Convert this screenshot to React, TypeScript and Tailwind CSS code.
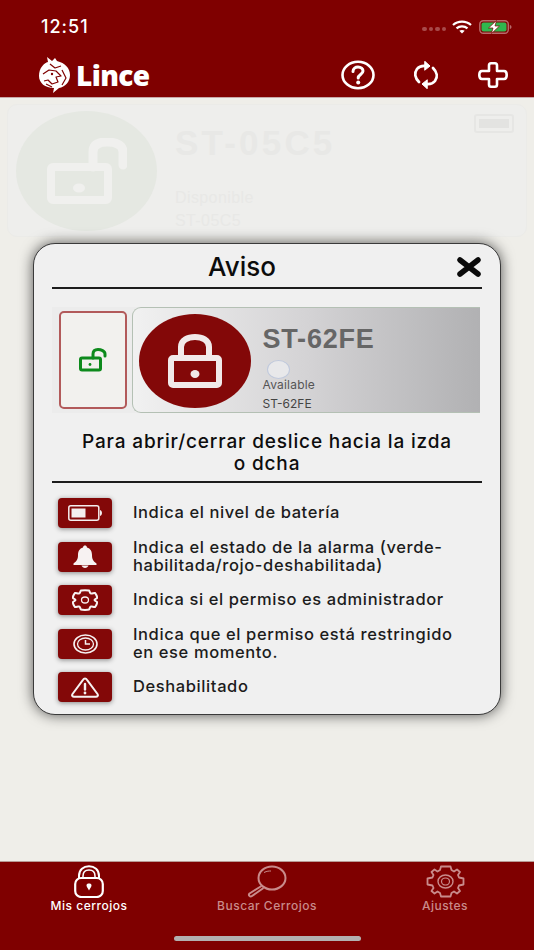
const sans = "font-['Inter','Liberation_Sans',sans-serif]";
const arial = "font-['Liberation_Sans',Arial,sans-serif]";

function LinceLogo() {
  return (
    <svg width="34" height="36" viewBox="0 0 34 36">
      <path d="M2 19C2 11 7 6 11 5L10 0L15 4L18 1L20 4C28 6 33 11 33 18C33 25 28 30 22 31L16 36L17 31C8 31 2 26 2 19Z" fill="#fff" />
      <path d="M6 17L12 13L19 14L24 19L19 20L21 25L15 27L11 23L7 24M13 7L18 11L24 9M25 13L29 21L25 28M9 27L15 30" fill="none" stroke="#7f0000" strokeWidth="1.2" strokeLinejoin="round" />
      <circle cx="15" cy="17" r="1.2" fill="#7f0000" />
    </svg>
  );
}

function HelpIcon() {
  return (
    <svg width="34" height="30" viewBox="0 0 34 30" fill="none" stroke="#fff">
      <ellipse cx="17" cy="15" rx="15.5" ry="13.2" strokeWidth="2.6" />
      <path d="M12 11.5C12 8.5 14.5 7 17 7C20 7 22 8.8 22 11C22 14.5 17.2 14.5 17.2 18" strokeWidth="3" strokeLinecap="round" />
      <circle cx="17.2" cy="22.5" r="2" fill="#fff" stroke="none" />
    </svg>
  );
}

function RefreshIcon() {
  return (
    <svg width="26" height="28" viewBox="0 0 26 28" fill="none" stroke="#fff" strokeWidth="2.8" strokeLinecap="round">
      <path d="M6 21C2 17 1 12 4 8C6 5.5 9 4.5 13 5" />
      <path d="M20 7C24 11 25 16 22 20C20 22.5 17 23.5 13 23" />
      <path d="M12 0.5L17 5L12 9Z" fill="#fff" strokeWidth="1" strokeLinejoin="round" />
      <path d="M14 19L9 23L14 27.5Z" fill="#fff" strokeWidth="1" strokeLinejoin="round" />
    </svg>
  );
}

function PlusIcon() {
  return (
    <svg width="30" height="26" viewBox="0 0 30 26" fill="none" stroke="#fff" strokeWidth="2.6" strokeLinejoin="round">
      <path d="M11 3.5C11 2 12 1.3 13 1.3H17C18 1.3 19 2 19 3.5V9H26C28 9 28.7 10.5 28.7 13C28.7 15.5 28 17 26 17H19V22.5C19 24 18 24.7 17 24.7H13C12 24.7 11 24 11 22.5V17H4C2 17 1.3 15.5 1.3 13C1.3 10.5 2 9 4 9H11Z" />
    </svg>
  );
}

function StatusIcons() {
  return (
    <div className="flex items-center mt-[3px]">
      <div className="flex gap-[2px] mr-[6px] mt-[4px]">
        <span className="w-[4.5px] h-[4.5px] rounded-full bg-[#a84a4a]" />
        <span className="w-[4.5px] h-[4.5px] rounded-full bg-[#a84a4a]" />
        <span className="w-[4.5px] h-[4.5px] rounded-full bg-[#a84a4a]" />
        <span className="w-[4.5px] h-[4.5px] rounded-full bg-[#a84a4a]" />
      </div>
      <svg width="20" height="14" viewBox="0 0 20 14" fill="none" stroke="#fff" strokeWidth="2.2" className="mr-[7px]">
        <path d="M1 5C6 0.5 14 0.5 19 5" />
        <path d="M4.5 8.3C7.5 5.7 12.5 5.7 15.5 8.3" />
        <path d="M10 13.5L7.3 10.8C8.8 9.8 11.2 9.8 12.7 10.8Z" fill="#fff" stroke="none" />
      </svg>
      <svg width="33" height="14" viewBox="0 0 33 14">
        <rect x="0.8" y="0.8" width="28.5" height="12.4" rx="3.5" fill="none" stroke="#b86a6a" strokeWidth="1.4" />
        <rect x="2.5" y="2.5" width="25" height="9" rx="2" fill="#2fb84e" />
        <path d="M30.8 5V9C32 8.7 32.5 8 32.5 7C32.5 6 32 5.3 30.8 5Z" fill="#b86a6a" />
        <path d="M17.5 0.5L9.5 8H14L12.5 13.5L20.5 6H16Z" fill="#fff" stroke="#7f0000" strokeWidth="0.7" />
      </svg>
    </div>
  );
}

function OpenLockBig() {
  return (
    <svg width="80" height="66" viewBox="0 0 80 66" fill="none" stroke="#f0f0ee" strokeWidth="8" strokeLinejoin="round">
      <rect x="4" y="29" width="57" height="33" rx="2" />
      <path d="M46 29V14C46 7 51 4 60 4C69 4 76 7 76 14V27" strokeLinecap="round" strokeWidth="9" />
      <ellipse cx="32" cy="50" rx="6" ry="4.5" fill="#f0f0ee" stroke="none" />
    </svg>
  );
}

function BackgroundCard() {
  return (
    <div className="mx-[7px] mt-[6px] h-[133px] rounded-[10px] bg-[#eeeeec] border border-[#ebebe8] flex relative">
      <div className="ml-[8px] mt-[6px] w-[141px] h-[120px] rounded-[50%] bg-[#e5e8e2] flex items-center justify-center">
        <OpenLockBig />
      </div>
      <div className={`ml-[18px] flex flex-col text-[#e8e8e6] ${arial}`}>
        <span className="mt-[20px] text-[35px] leading-[36px] font-bold tracking-[3.2px]">ST-05C5</span>
        <span className="mt-[28px] text-[16px] leading-[18px] font-medium tracking-[0.4px]">Disponible</span>
        <span className="mt-[5px] text-[16px] leading-[18px] tracking-[0.4px]">ST-05C5</span>
      </div>
      <div className="absolute right-[12px] top-[9px] w-[40px] h-[19px] border-[2px] border-[#e6e6e4] rounded-[3px] p-[3px]">
        <div className="w-full h-full bg-[#e3e3e1]" />
      </div>
    </div>
  );
}

function SampleRow() {
  return (
    <div className="mt-[18px] h-[106px] w-[428px] bg-[#ececec] flex items-center">
      <div className="ml-[7px] w-[68px] h-[98px] shrink-0 rounded-[5px] border-[2px] border-[#b25a5a] bg-[#f2f1ee] flex items-center justify-center">
        <svg width="28" height="24" viewBox="0 0 28 24" fill="none" stroke="#0d8a1c" strokeWidth="3" strokeLinejoin="round">
          <rect x="1.5" y="10" width="20" height="12" rx="1.5" />
          <path d="M14 10V6C14 3 16 1.5 19 1.5C22 1.5 26 3 26 6V8" strokeLinecap="round" />
          <circle cx="11" cy="16.500" r="1.4" fill="#0d8a1c" stroke="none" />
        </svg>
      </div>
      <div className="ml-[4.5px] flex-1 h-[106px] rounded-l-[9px] border-y border-l border-[#b4c0b4] bg-gradient-to-r from-[#f1f1f1] via-[#d4d3d5] to-[#b1b1b3] flex">
        <div className="ml-[6px] mt-[6px] w-[112px] h-[94px] rounded-[50%] bg-[#830808] flex items-center justify-center">
          <svg width="54" height="54" viewBox="0 0 54 54" fill="none" stroke="#f1e9e9" strokeWidth="6" strokeLinejoin="round">
            <rect x="3" y="24" width="48" height="27" rx="2" />
            <path d="M13 24V13C13 6 20 3 27 3C34 3 41 6 41 13V24" />
            <ellipse cx="27" cy="40" rx="4.5" ry="4" fill="#f1e9e9" stroke="none" />
          </svg>
        </div>
        <div className={`ml-[12px] flex flex-col text-[#666] ${arial}`}>
          <span className="mt-[16px] text-[27px] leading-[30px] font-bold tracking-[0.8px]">ST-62FE</span>
          <span className="mt-[6px] ml-[4px] w-[23px] h-[19px] rounded-[50%] bg-[#e8e8ea] border border-[#c0c9dc]" />
          <span className={`-mt-[1px] text-[12px] leading-[14px] tracking-[0.2px] text-[#555] ${sans}`}>Available</span>
          <span className={`mt-[5px] text-[12px] leading-[14px] text-[#444] ${sans}`}>ST-62FE</span>
        </div>
      </div>
    </div>
  );
}

function IconBox({ children }: { children: React.ReactNode }) {
  return (
    <div className="w-[54px] h-[30px] shrink-0 rounded-[4px] bg-[#830808] shadow-[0_1px_5px_rgba(0,0,0,0.45)] flex items-center justify-center">
      {children}
    </div>
  );
}

const legend: { text: React.ReactNode; icon: React.ReactNode }[] = [
  {
    text: "Indica el nivel de batería",
    icon: (
      <svg width="34" height="16" viewBox="0 0 34 16">
        <rect x="0.8" y="0.8" width="30" height="14.4" rx="2" fill="none" stroke="#f4eeee" strokeWidth="1.5" />
        <rect x="3.5" y="3.5" width="14" height="9" fill="#f4eeee" />
        <path d="M32 5V11C33.5 10.5 34 9 34 8C34 7 33.5 5.5 32 5Z" fill="#f4eeee" />
      </svg>
    ),
  },
  {
    text: (
      <>
        Indica el estado de la alarma (verde-
        <br />
        habilitada/rojo-deshabilitada)
      </>
    ),
    icon: (
      <svg width="24" height="23" viewBox="0 0 24 23" fill="#f7f2f2">
        <path d="M12 0.5C13 0.5 13.8 1 14 2.5C17.5 3.5 19 6.5 19 10C19 14 20 16 23.5 18.5V20H0.5V18.5C4 16 5 14 5 10C5 6.5 6.5 3.5 10 2.5C10.2 1 11 0.5 12 0.5Z" />
        <path d="M8.5 20.5C9 22 10.5 23 12 23C13.5 23 15 22 15.5 20.5Z" />
      </svg>
    ),
  },
  {
    text: "Indica si el permiso es administrador",
    icon: (
      <svg width="26" height="22" viewBox="0 0 26 22" fill="none" stroke="#f7f2f2" strokeWidth="2" strokeLinejoin="round">
        <path d="M9 1.5C10 1 16 1 17 1.5C18 2.5 17.5 4 19 4.5C20.5 5 21.5 3.5 23 4C24 5 25.5 8 25 9C24.5 10 22.5 10 22.5 11C22.5 12 24.5 12 25 13C25.5 14 24 17 23 18C21.5 18.5 20.5 17 19 17.5C17.5 18 18 19.5 17 20.5C16 21 10 21 9 20.5C8 19.5 8.5 18 7 17.5C5.5 17 4.5 18.5 3 18C2 17 0.5 14 1 13C1.5 12 3.5 12 3.5 11C3.5 10 1.5 10 1 9C0.5 8 2 5 3 4C4.5 3.5 5.5 5 7 4.5C8.5 4 8 2.5 9 1.5Z" />
        <ellipse cx="13" cy="11" rx="3.5" ry="3" strokeWidth="1.3" />
      </svg>
    ),
  },
  {
    text: (
      <>
        Indica que el permiso está restringido
        <br />
        en ese momento.
      </>
    ),
    icon: (
      <svg width="25" height="20" viewBox="0 0 25 20" fill="none" stroke="#f7f2f2">
        <ellipse cx="12.5" cy="10" rx="11.5" ry="9" strokeWidth="1.6" />
        <ellipse cx="12.5" cy="10" rx="8" ry="6" strokeWidth="1.3" />
        <path d="M12.5 6V10H17" strokeWidth="1.5" />
      </svg>
    ),
  },
  {
    text: "Deshabilitado",
    icon: (
      <svg width="28" height="21" viewBox="0 0 28 21" fill="none" stroke="#f7f2f2" strokeWidth="2" strokeLinejoin="round">
        <path d="M14 1.5C15 1.5 15.5 2 16 2.8L26.5 17C27.5 18.5 26.5 19.7 25 19.7H3C1.5 19.7 0.5 18.5 1.5 17L12 2.8C12.5 2 13 1.5 14 1.5Z" />
        <path d="M14 7V12.5" strokeWidth="2.4" strokeLinecap="round" />
        <circle cx="14" cy="16" r="1.4" fill="#f7f2f2" stroke="none" />
      </svg>
    ),
  },
];

function Modal() {
  return (
    <div className="absolute left-[33px] top-[243px] w-[468px] h-[472px] rounded-[22px] border-[1.5px] border-[#3a3a3a] bg-[#f0f0f0] shadow-[0_0_14px_rgba(0,0,0,0.65)] px-[18px]">
      <div className="relative h-[45px] pr-[50px] flex items-center justify-center border-b-[2px] border-[#1c1c1c]">
        <span className={`text-[26px] leading-[28px] font-medium text-[#0c0c0c] mt-[3px] ${sans}`}>Aviso</span>
        <svg width="24" height="20" viewBox="0 0 24 20" className="absolute right-[1px] top-[13px]">
          <path d="M3 3L21 17M21 3L3 17" stroke="#0a0a0a" strokeWidth="5.5" strokeLinecap="round" />
        </svg>
      </div>
      <SampleRow />
      <p className={`mt-[18px] w-[430px] text-center text-[19px] leading-[22px] font-medium tracking-[0.85px] text-[#0d0d0d] ${sans}`}>
        Para abrir/cerrar deslice hacia la izda
        <br />o dcha
      </p>
      <div className="mt-[6px] border-t-[2px] border-[#1c1c1c] w-[430px]" />
      <div className="mt-[15px] flex flex-col gap-[13.5px]">
        {legend.map((row, i) => (
          <div key={i} className="h-[30px] flex items-center pl-[6px]">
            <IconBox>{row.icon}</IconBox>
            <span className={`ml-[21px] text-[16.5px] leading-[17.5px] font-medium tracking-[0.6px] text-[#1c1c1c] ${sans}`}>{row.text}</span>
          </div>
        ))}
      </div>
    </div>
  );
}

function TabLock() {
  return (
    <svg width="30" height="33" viewBox="0 0 30 33" fill="none" stroke="#fff" strokeWidth="2">
      <rect x="1.2" y="13" width="27.6" height="19" rx="6" strokeWidth="2.2" />
      <path d="M5 13V11C5 4.5 9.5 1.2 15 1.2C20.5 1.2 25 4.5 25 11V13" />
      <path d="M9 13V11C9 7 11.5 5 15 5C18.5 5 21 7 21 11V13" strokeWidth="1.5" />
      <path d="M12.5 20.5C12.5 19 13.5 18.5 15 18.5C16.5 18.5 17.5 19 17.5 20.5C17.5 22 16 23 15 25.5C14 23 12.5 22 12.5 20.5Z" fill="#fff" stroke="none" />
    </svg>
  );
}

function TabSearch() {
  return (
    <svg width="40" height="33" viewBox="0 0 40 33" fill="none" stroke="#c98b8b" strokeWidth="2">
      <ellipse cx="25" cy="13" rx="13.5" ry="11.5" />
      <path d="M17 7.5C20 6 22 6 24 6" strokeWidth="1" />
      <path d="M14.5 21L2.5 28.5C1 30 3 32.5 5 31L16.5 23" strokeLinejoin="round" />
    </svg>
  );
}

function TabGear() {
  return (
    <svg width="39" height="33" viewBox="0 0 39 33" fill="none" stroke="#c98b8b" strokeWidth="1.8" strokeLinejoin="round">
      <path d="M15 1.5H24.5L25.5 5L28 6.5L31 4.5L34 7L32 10L33 12.5L37.5 13.5V19.5L33 20.5L32 23L34 26L31 28.5L28 26.5L25.5 28L24.5 31.5H15L14 28L11.5 26.5L8.5 28.5L5.5 26L7.5 23L6.5 20.5L1.5 19.5V13.5L6.5 12.5L7.5 10L5.5 7L8.5 4.5L11.5 6.5L14 5Z" />
      <ellipse cx="19.5" cy="16.5" rx="7.5" ry="6.5" strokeWidth="1.4" />
      <ellipse cx="19.5" cy="16.5" rx="4" ry="3.5" strokeWidth="1.2" />
    </svg>
  );
}

function TabItem({ icon, label, active }: { icon: React.ReactNode; label: string; active?: boolean }) {
  return (
    <div className="w-[178px] flex flex-col items-center">
      <div className="h-[33px] flex items-end">{icon}</div>
      <span className={`mt-[1px] text-[12px] leading-[14px] font-medium tracking-[0.5px] ${sans} ${active ? "text-white" : "text-[#c98b8b]"}`}>{label}</span>
    </div>
  );
}

export default function App() {
  return (
    <div className="relative w-[534px] h-[950px] overflow-hidden flex flex-col bg-[#efeee9]">
      <header className="h-[98px] shrink-0 bg-[#7f0000] border-b border-[#c9a8a8]">
        <div className="h-[53px] pl-[41px] pr-[22px] pt-[17px] flex justify-between items-start">
          <span className={`text-[18px] leading-[20px] font-medium tracking-[1px] text-white ${sans}`}>12:51</span>
          <StatusIcons />
        </div>
        <div className="flex items-center pl-[37px] pr-[26px] h-[44px]">
          <LinceLogo />
          <span className="ml-[5px] text-[28px] leading-[30px] font-extrabold text-white font-['Open_Sans',sans-serif] tracking-[-0.6px]">Lince</span>
          <div className="ml-auto flex items-center">
            <HelpIcon />
            <div className="ml-[38px]">
              <RefreshIcon />
            </div>
            <div className="ml-[39px]">
              <PlusIcon />
            </div>
          </div>
        </div>
      </header>
      <main className="flex-1">
        <BackgroundCard />
      </main>
      <nav className="h-[89px] shrink-0 bg-[#7f0000] border-t border-[#b89a94] flex flex-col">
        <div className="flex pt-[3px]">
          <TabItem icon={<TabLock />} label="Mis cerrojos" active />
          <TabItem icon={<TabSearch />} label="Buscar Cerrojos" />
          <TabItem icon={<TabGear />} label="Ajustes" />
        </div>
        <div className="mt-auto mb-[9px] mx-auto w-[187px] h-[5px] rounded-full bg-[#b3b0b0]" />
      </nav>
      <Modal />
    </div>
  );
}
